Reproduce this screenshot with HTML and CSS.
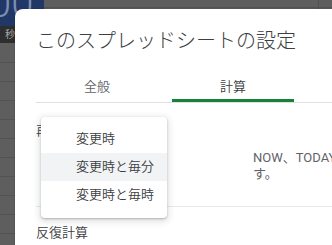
FILE: index.html
```html
<!DOCTYPE html>
<html lang="ja">
<head>
<meta charset="utf-8">
<link rel="stylesheet" href="styles.css">
</head>
<body>
<div class="sheet">
  <div class="cell-blue"><span class="big">00</span></div>
  <div class="row-dark"><span class="sec">秒</span><span class="dim">■</span></div>
  <div class="col-line"></div>
</div>

<div class="dialog">
  <h1 class="title">このスプレッドシートの設定</h1>
  <div class="tabs">
    <div class="tab">全般</div>
    <div class="tab active">計算</div>
  </div>
  <div class="content">
    <div class="label">再計算</div>
    <div class="recalc-row">
      <div class="select-space"></div>
      <div class="desc">NOW、TODAY、RAND、RANDBETWEEN の各関数の更新頻度を指定しま<br>す。</div>
    </div>
    <div class="divider"></div>
    <div class="label label-iter">反復計算</div>
  </div>
</div>

<div class="menu">
  <div class="item">変更時</div>
  <div class="item hover">変更時と毎分</div>
  <div class="item">変更時と毎時</div>
</div>
</body>
</html>
```

FILE: styles.css
```css
html, body {
  margin: 0;
  padding: 0;
}
body {
  width: 332px;
  height: 245px;
  overflow: hidden;
  position: relative;
  background: #5e5e5e;
  font-family: Roboto, "Noto Sans CJK JP", sans-serif;
}
.sheet {
  position: absolute;
  left: 0;
  top: 0;
  width: 332px;
  height: 245px;
  background-color: #5e5e5e;
  background-image: repeating-linear-gradient(to bottom, transparent 0, transparent 18px, #535353 18px, #535353 19px);
  background-position: 0 44px;
}
.cell-blue {
  position: absolute;
  left: 0;
  top: 0;
  width: 44px;
  height: 26px;
  background: #213766;
  overflow: hidden;
}
.big {
  position: absolute;
  left: -11px;
  top: -16px;
  font-size: 40px;
  line-height: 40px;
  color: #7d8db0;
  font-family: Roboto, sans-serif;
  font-weight: 300;
}
.row-dark {
  position: absolute;
  left: 0;
  top: 26px;
  width: 44px;
  height: 17px;
  background: #2e2e2e;
  font-size: 10px;
  line-height: 17px;
  color: #a9a9a9;
}
.sec {
  margin-left: 5px;
}
.dim {
  margin-left: 5px;
  color: #4a4a4a;
}
.col-line {
  position: absolute;
  left: 318px;
  top: 0;
  width: 1px;
  height: 9px;
  background: #505050;
}
.dialog {
  position: absolute;
  left: 15px;
  top: 9px;
  width: 420px;
  height: 300px;
  background: #fff;
  border-radius: 8px;
  box-shadow: 0 0 2px rgba(0,0,0,0.25);
  padding: 18px 0 0 21px;
  box-sizing: border-box;
}
.title {
  margin: 0;
  font-size: 20px;
  line-height: 28px;
  font-weight: 300;
  color: #3c4043;
  white-space: nowrap;
}
.tabs {
  display: flex;
  gap: 14px;
  margin-top: 19px;
  border-bottom: 1px solid #e0e0e0;
}
.tab {
  width: 122px;
  height: 28px;
  box-sizing: border-box;
  text-align: center;
  font-size: 13px;
  line-height: 26px;
  color: #5f6368;
  font-weight: 350;
  border-bottom: 3px solid transparent;
}
.tab.active {
  color: #3c4043;
  border-bottom-color: #188038;
}
.content {
  padding-top: 20px;
}
.label {
  font-size: 13px;
  line-height: 16px;
  color: #3c4043;
  font-weight: 350;
}
.recalc-row {
  display: flex;
  margin-top: 11px;
}
.select-space {
  width: 217px;
  flex: none;
}
.desc {
  font-size: 13px;
  line-height: 16px;
  color: #5f6368;
  white-space: nowrap;
}
.divider {
  height: 1px;
  background: #e8eaed;
  margin-top: 24px;
}
.label-iter {
  margin-top: 17px;
  line-height: 18px;
}
.menu {
  position: absolute;
  left: 41px;
  top: 117px;
  width: 126px;
  padding: 8px 0 9px;
  background: #fff;
  border-radius: 4px;
  box-shadow: 0 1px 2px rgba(60,64,67,0.3), 0 2px 6px 2px rgba(60,64,67,0.15);
}
.item {
  height: 28px;
  line-height: 28px;
  padding-left: 35px;
  font-size: 13px;
  color: #3c4043;
  font-weight: 350;
}
.item.hover {
  background: #f1f3f4;
}
```
